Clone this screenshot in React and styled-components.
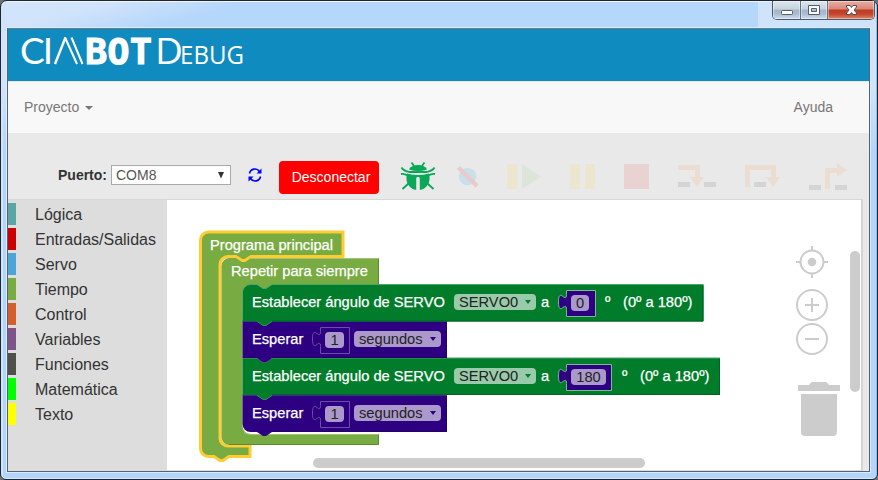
import React from "react";
import styled, { createGlobalStyle } from "styled-components";

const GlobalStyle = createGlobalStyle`
  * { box-sizing: border-box; }
  body { margin: 0; background: #6d7177; font-family: "Liberation Sans", Arial, sans-serif; overflow: hidden; }
`;

const Window = styled.div`
  width: 878px;
  height: 480px;
  display: flex;
  flex-direction: column;
  padding: 0 7px 7px 6px;
  border: 1px solid #20252e;
  border-radius: 7px 7px 6px 6px;
  background:
    linear-gradient(90deg, #cfe3fb 0 2px, transparent 2px),
    linear-gradient(90deg, transparent 0 757px, #cfe3fb 757px) 0 0 / 100% 28px no-repeat,
    linear-gradient(165deg, #d3e5fb 0, #d0e3fb 30px, #b5d7fb 65px, #b5d7fb 100%) 0 0 / 100% 28px no-repeat,
    linear-gradient(180deg, #d0e3fb 0, #cfe3fb 90px, #b3d5fb 150px);
  box-shadow: inset 0 1px 0 #eef6ff, inset 0 -1px 0 #d7e9fd, inset -1px 0 0 #8ac5e8;
`;

const TitleBar = styled.div`
  height: 27px;
  flex: none;
  display: flex;
  justify-content: flex-end;
  align-items: flex-start;
  margin-right: -5px;
`;

const Controls = styled.div`
  display: flex;
  height: 19px;
  width: 103px;
  border: 1px solid #4e5a6b;
  border-top: 0;
  border-radius: 0 0 5px 5px;
  overflow: hidden;
`;

const ControlButton = styled.button`
  width: ${(p) => p.$w}px;
  padding: 0;
  border: 0;
  border-right: ${(p) => (p.$last ? 0 : "1px solid #66727f")};
  background: ${(p) =>
    p.$close
      ? "linear-gradient(180deg, #e9aea1 0, #d98878 8px, #bf3a25 9px, #c4442c 13px, #dd8a68 18px)"
      : "linear-gradient(180deg, #dde7f2 0, #c6d2e0 8px, #a5b6ca 9px, #aabcd0 13px, #cfdeed 18px)"};
  box-shadow: inset 0 0 0 1px rgba(255, 255, 255, 0.4);
  svg { display: block; }
`;

const Client = styled.div`
  flex: 1;
  min-height: 0;
  display: flex;
  flex-direction: column;
  border: 1px solid #566373;
  border-top-color: #6b7a86;
  background: #e9e9e9;
  box-shadow: 0 0 0 1px #dcebfc;
`;

const Brand = styled.header`
  height: 52px;
  flex: none;
  background: #108bc0;
  svg { display: block; overflow: visible; }
`;

const Nav = styled.nav`
  height: 52px;
  flex: none;
  display: flex;
  align-items: center;
  justify-content: space-between;
  padding: 0 36px 2px 16px;
  background: #f8f8f8;
  border-top: 1px solid #e7e7e7;
  color: #777;
  font-size: 14px;
`;

const NavItem = styled.span`
  display: flex;
  align-items: center;
  gap: 6px;
`;

const Caret = styled.i`
  margin-top: 2px;
  border: 4px solid transparent;
  border-top-color: #777;
  border-bottom: 0;
`;

const Toolbar = styled.div`
  height: 66px;
  flex: none;
  display: flex;
  align-items: flex-start;
  padding: 27px 0 0 50px;
  background: #e9e9e9;
`;

const PortLabel = styled.label`
  width: 53px;
  padding-top: 7px;
  font: bold 14px/16px "Liberation Sans", Arial, sans-serif;
  color: #333;
`;

const PortSelect = styled.div`
  width: 120px;
  height: 20px;
  margin-top: 5px;
  padding: 0 6px 0 4px;
  display: flex;
  align-items: center;
  justify-content: space-between;
  border: 1px solid #a9a9a9;
  background: #fff;
  color: #555;
  font-size: 14px;
`;

const Refresh = styled.svg`
  margin: 7px 0 0 16px;
`;

const Disconnect = styled.button`
  width: 100px;
  height: 33px;
  margin: 1px 0 0 16px;
  padding: 0 0 1px 4px;
  border: 0;
  border-radius: 4px;
  background: #f00;
  color: #fff;
  font: 14px "Liberation Sans", Arial, sans-serif;
`;

const DebugIcons = styled.svg`
  display: block;
`;

const Body = styled.div`
  flex: 1;
  min-height: 0;
  display: flex;
`;

const Toolbox = styled.div`
  width: 159px;
  padding-top: 3px;
  background: #ddd;
  border-top: 1px solid #d7d7d7;
`;

const Category = styled.div`
  height: 22px;
  margin-bottom: 3px;
  padding-left: 19px;
  border-left: 8px solid ${(p) => p.$color};
  font-size: 16px;
  line-height: 24px;
  color: #333;
`;

const Workspace = styled.div`
  position: relative;
  width: 696px;
  background: #fff;
  border: 1px solid #d8d8d8;
  border-left: 0;
  border-right: 2px solid #d4d4d4;
  border-bottom-color: #ddd;
`;

const Shapes = styled.svg`
  position: absolute;
  left: 0;
  top: 0;
  display: block;
`;

const BlockRow = styled.div`
  position: absolute;
  left: ${(p) => p.$x}px;
  top: ${(p) => p.$y}px;
  display: flex;
  align-items: center;
  height: 20px;
  color: #fff;
  font-size: 14.67px;
  line-height: 20px;
`;

const Label = styled.span`
  width: ${(p) => p.$w}px;
  flex: none;
  white-space: nowrap;
  -webkit-text-stroke: 0.25px #fff;
`;

const Field = styled.span`
  width: ${(p) => p.$w}px;
  height: 16px;
  margin: ${(p) => p.$dy || 0}px ${(p) => p.$gap}px 0 0;
  padding: 0 5px;
  flex: none;
  display: flex;
  align-items: center;
  justify-content: ${(p) => (p.$menu ? "space-between" : "center")};
  border-radius: 4px;
  background: ${(p) => p.$bg};
  color: #222;
  line-height: 16px;
`;

const MenuArrow = styled.i`
  border: 3px solid transparent;
  border-top: 4px solid ${(p) => p.$color};
  border-bottom: 0;
`;

const NAVY = "#2c0080";
const GREEN = "#007c2a";
const OLIVE = "#78ab41";

const categories = [
  ["Lógica", "#5ba5a5"],
  ["Entradas/Salidas", "#cc0000"],
  ["Servo", "#4ba5d6"],
  ["Tiempo", "#78ab41"],
  ["Control", "#d35f2d"],
  ["Variables", "#7e5388"],
  ["Funciones", "#4f5048"],
  ["Matemática", "#00ff00"],
  ["Texto", "#ffff00"],
];

function Logo() {
  return (
    <svg width="260" height="52" viewBox="8 29 260 52" fill="#fff">
      <text x="20" y="64" fontFamily="Lato" fontSize="37" textLength="33" lengthAdjust="spacing">CI</text>
      <g stroke="#fff" fill="none">
        <path d="M55 64 65.500 37.500" strokeWidth="2.400" />
        <path d="M65 37.500 77 64M71.500 37.500 82.500 64" strokeWidth="2" />
      </g>
      <text
        x="85" y="63.500" fontFamily="DejaVu Sans Mono, monospace" fontWeight="bold" fontSize="36"
        stroke="#fff" strokeWidth="1" textLength="67" lengthAdjust="spacingAndGlyphs"
      >
        BOT
      </text>
      <g fontFamily="Open Sans">
        <text x="155" y="64" fontSize="37" textLength="28" lengthAdjust="spacingAndGlyphs">D</text>
        <text x="180" y="64" fontSize="25" textLength="64" lengthAdjust="spacingAndGlyphs">EBUG</text>
      </g>
    </svg>
  );
}

function DebugTools() {
  return (
    <DebugIcons width="480" height="40" viewBox="379 160 480 40">
      <g fill="#0aa858" stroke="#0aa858">
        <path d="M409 169.500Q411 165 418 165T427 169.500Q418 172.500 409 169.500Z" stroke="none" />
        <path d="M407 173.500Q418 176.500 429 173.500Q430.500 180 428 184.500Q424.500 190 418 190T408 184.500Q405.500 180 407 173.500Z" stroke="none" />
        <path d="M411.500 162.500 414 166M424.500 162.500 422 166M401.500 167.500Q403 170.500 409 172H427Q433 170.500 434.500 167.500M408 175.500Q404 173.500 401 174M428 175.500Q432 173.500 435 174M408.500 183.500 402.500 189M427.500 183.500 433.500 189" fill="none" strokeWidth="1.800" />
        <path d="M418 190V178.500" stroke="#e9e9e9" strokeWidth="3.600" strokeLinecap="round" />
      </g>
      <circle cx="467.500" cy="176.500" r="8.700" fill="#c9dfe9" />
      <path d="m458.500 167.500 18.500 18.500" stroke="#e9cbc9" strokeWidth="4.500" />
      <path d="M507 164h10.500v25H507zM570 164h10v25h-10zM585 164h10v25h-10z" fill="#ece5d0" />
      <path d="m522 164 19 12.500L522 189z" fill="#dde5d8" />
      <path d="M624 164h25v25h-25z" fill="#e8d3d2" />
      <path d="M678 182h12v5h-12zM704 182h12v5h-12zM754 182h12v5h-12zM809 185h12v5h-12zM835 185h12v5h-12z" fill="#d4d4d4" />
      <g fill="#ebddd2">
        <path d="M678 165h22v12h4l-7 10-7-10h5v-7h-17z" />
        <path d="M745 165h31v12h4l-7 10-7-10h5v-7h-21v17h-5z" />
        <path d="M825 189v-21h12v-5l10 7-10 7v-4h-7v16z" />
      </g>
    </DebugIcons>
  );
}

const notch = "l6 4h3l6-4";
const notchBack = "l-6 4h-3l-6-4";

function StackShape({ y, right, color, light, dark, first, last }) {
  const start = first ? `M242.500 ${y + 8}a8 8 0 0 1 8-8` : `M242.500 ${y}`;
  const end = last ? `H250.500a8 8 0 0 1-8-8z` : `H242.500z`;
  return (
    <g>
      <path d={`${start}H257${notch}H${right}v37H272${notchBack}${end}`} fill={color} />
      <path d={`${start}H257${notch}H${right}`} fill="none" stroke={light} strokeWidth="1" />
      <path d={`M${right - 0.5} ${y + 1}v35.500H272`} fill="none" stroke={dark} strokeWidth="1" />
    </g>
  );
}

function ValueShape({ x, y, w, light, h = 26 }) {
  return (
    <path
      d={`M${x} ${y}h${w}v${h}h${-w}v-7c0-10-8 8-8-7.500s8 2.500 8-7.500z`}
      fill={NAVY}
      stroke={light}
      strokeWidth="1"
    />
  );
}

function BlockShapes() {
  return (
    <Shapes width="694" height="270" viewBox="167 200 694 270">
      <path
        d={`M200.500 240a8 8 0 0 1 8-8H343V256.500H251${notchBack}H228a8 8 0 0 0-8 8V438a8 8 0 0 0 8 8H250V456.500H229${notchBack}H208.500a8 8 0 0 1-8-8z`}
        fill={OLIVE} stroke="#fc3" strokeWidth="3"
      />
      <path
        d={`M221.500 266a8 8 0 0 1 8-8H236${notch}H379V284.500H272${notchBack}H250.500a8 8 0 0 0-8 8V426a8 8 0 0 0 8 8H379V445H229.500a8 8 0 0 1-8-8z`}
        fill={OLIVE}
      />
      <path d="M251 258.500H378.500M244 432.500Q247 434.500 251 434.500H378.500" fill="none" stroke="#a1c47a" />
      <path d="M378.500 259V284M378.500 435V444.500H229" fill="none" stroke="#608934" />
      <StackShape y={395} right={447} color={NAVY} light="#6b4da6" dark="#230066" last />
      <StackShape y={358} right={720} color={GREEN} light="#4da36a" dark="#006322" />
      <StackShape y={321} right={447} color={NAVY} light="#6b4da6" dark="#230066" />
      <StackShape y={284.5} right={703.5} color={GREEN} light="#4da36a" dark="#006322" first />
      <path d="M257 321.500l6 4h3l6-4M257 395.500l6 4h3l6-4" fill={GREEN} stroke="#4da36a" strokeWidth=".6" />
      <path d="M257 358.500l6 4h3l6-4" fill={NAVY} stroke="#6b4da6" strokeWidth=".6" />
      <ValueShape x={566.5} y={290.5} w={29} light="#7fb894" />
      <ValueShape x={566.5} y={364.5} w={45} light="#7fb894" />
      <ValueShape x={320.5} y={327.5} w={29} light="#6b4da6" />
      <ValueShape x={320.5} y={401.5} w={29} light="#6b4da6" />
      <g stroke="#ccc" strokeWidth="2" fill="none">
        <circle cx="812" cy="262" r="11.500" />
        <path d="M812 246v5M812 273v5M796 262h5M823 262h5M805 305h14M812 298v14M805 339h14" />
        <circle cx="812" cy="305" r="15" />
        <circle cx="812" cy="339" r="15" />
      </g>
      <g fill="#ccc">
        <circle cx="812" cy="262" r="4.300" />
        <path d="M798 385h11l2.500-3h15l2.500 3h11v6h-42zM801 394h36v38q0 4-4 4h-28q-4 0-4-4z" />
        <rect x="850" y="251" width="10" height="141" rx="5" />
        <rect x="313" y="458" width="332" height="10" rx="5" />
      </g>
    </Shapes>
  );
}

function ServoRow({ y, angle, fieldWidth }) {
  return (
    <BlockRow $x={85} $y={y}>
      <Label $w={202}>Establecer ángulo de SERVO</Label>
      <Field $w={82} $gap={5} $bg="#99cbaa" $menu>SERVO0<MenuArrow $color={GREEN} /></Field>
      <Label $w={30}>a</Label>
      <Field $w={fieldWidth} $gap={16} $dy={2} $bg="#ab99cc">{angle}</Field>
      <Label $w={18}>º</Label>
      <Label $w={74}>(0º a 180º)</Label>
    </BlockRow>
  );
}

function WaitRow({ y }) {
  return (
    <BlockRow $x={85} $y={y}>
      <Label $w={73}>Esperar</Label>
      <Field $w={19} $gap={10} $dy={2} $bg="#ab99cc">1</Field>
      <Field $w={87} $gap={0} $bg="#ab99cc" $menu>segundos<MenuArrow $color={NAVY} /></Field>
    </BlockRow>
  );
}

export default function App() {
  return (
    <>
      <GlobalStyle />
      <Window>
        <TitleBar>
          <Controls>
            <ControlButton $w={28}>
              <svg width="27" height="19"><rect x="8.500" y="9.500" width="11" height="4" rx="1" fill="#fff" stroke="#555d6b" /></svg>
            </ControlButton>
            <ControlButton $w={27}>
              <svg width="26" height="19"><path d="M7.500 4.500h11v9h-11zM10.500 7.500h5v3h-5z" fill="#fff" fillRule="evenodd" stroke="#555d6b" /></svg>
            </ControlButton>
            <ControlButton $w={46} $close $last>
              <svg width="46" height="19"><path d="M18.500 4.500h3.500l1.500 2 1.500-2h3.500v1.500l-2.500 3 2.500 3v1.500h-3.500l-1.500-2-1.500 2h-3.500v-1.500l2.500-3-2.500-3z" fill="#fff" stroke="#554c58" /></svg>
            </ControlButton>
          </Controls>
        </TitleBar>
        <Client>
          <Brand><Logo /></Brand>
          <Nav>
            <NavItem>Proyecto<Caret /></NavItem>
            <NavItem>Ayuda</NavItem>
          </Nav>
          <Toolbar>
            <PortLabel>Puerto:</PortLabel>
            <PortSelect>
              COM8
              <svg width="6" height="7"><path d="M0 0h6L3 6.500z" fill="#333" /></svg>
            </PortSelect>
            <Refresh width="16" height="16" viewBox="0 0 16 16" fill="none" stroke="#00f" strokeWidth="1.600">
              <path d="M2.500 6.500A5.500 5.500 0 0 1 12.500 4.500M13.500 9.500A5.500 5.500 0 0 1 3.500 11.500" />
              <path d="M14.500 1.500v5h-5zM1.500 14.500v-5h5z" fill="#00f" stroke="none" />
            </Refresh>
            <Disconnect>Desconectar</Disconnect>
            <DebugTools />
          </Toolbar>
          <Body>
            <Toolbox>
              {categories.map(([name, color]) => (
                <Category key={name} $color={color}>{name}</Category>
              ))}
            </Toolbox>
            <Workspace>
              <BlockShapes />
              <BlockRow $x={43} $y={35}><Label $w={130}>Programa principal</Label></BlockRow>
              <BlockRow $x={64} $y={61}><Label $w={140}>Repetir para siempre</Label></BlockRow>
              <ServoRow y={92} angle="0" fieldWidth={18} />
              <WaitRow y={129} />
              <ServoRow y={166} angle="180" fieldWidth={35} />
              <WaitRow y={203} />
            </Workspace>
          </Body>
        </Client>
      </Window>
    </>
  );
}
